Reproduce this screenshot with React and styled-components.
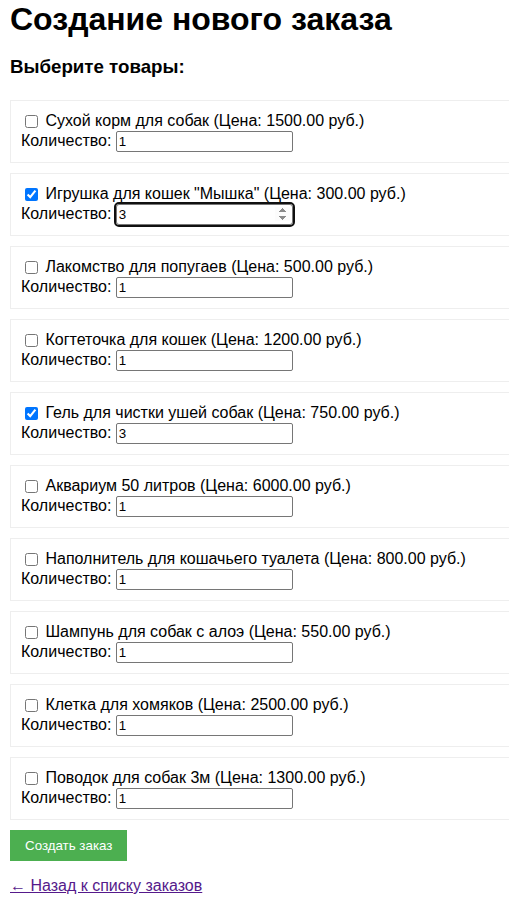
import React from 'react'
import styled, { createGlobalStyle } from 'styled-components'

const GlobalStyle = createGlobalStyle`
  body {
    margin: 0;
    padding: 0 10px;
    font-family: "Liberation Sans", Arial, sans-serif;
    color: #000;
    background: #fff;
  }
`

const Page = styled.div`
  padding-top: 1px;
`

const Title = styled.h1`
  font-size: 32px;
  font-weight: bold;
  margin: 0 0 18px;
`

const SubTitle = styled.h3`
  font-size: 18.72px;
  font-weight: bold;
  margin: 0 0 22px;
`

const Item = styled.div`
  width: 100%;
  border: 1px solid #eee;
  padding: 10px;
  margin-bottom: 10px;
  font-size: 16px;
`

const CheckLine = styled.label`
  display: block;
  height: 20px;
  line-height: 20px;
`

const Check = styled.input`
  margin: 3px 3px 3px 4px;
  vertical-align: -2px;
  accent-color: #0075ff;
`

const QtyLine = styled.label`
  display: block;
  height: 21px;
`

const QtyInput = styled.input`
  width: 177px;
  height: 21px;
  box-sizing: border-box;
  font-family: "Liberation Sans", Arial, sans-serif;
  font-size: 13.33px;
  padding: 1px 2px;
  border: 1px solid #767676;
  border-radius: 2px;
  ${p => p.$active && `
    outline: 2px solid #101010;
    outline-offset: 0;
    border-radius: 3px;
    &::-webkit-inner-spin-button { opacity: 1; }
  `}
`

const SubmitButton = styled.button`
  background: #4caf50;
  color: #fff;
  border: none;
  padding: 8px 15px;
  font-family: "Liberation Sans", Arial, sans-serif;
  font-size: 13.33px;
  cursor: pointer;
`

const Footer = styled.p`
  margin: 16px 0;
  font-size: 16px;
`

const BackLink = styled.a`
  color: #551a8b;
`

const products = [
  { name: 'Сухой корм для собак', price: '1500.00', checked: false, qty: 1 },
  { name: 'Игрушка для кошек "Мышка"', price: '300.00', checked: true, qty: 3, active: true },
  { name: 'Лакомство для попугаев', price: '500.00', checked: false, qty: 1 },
  { name: 'Когтеточка для кошек', price: '1200.00', checked: false, qty: 1 },
  { name: 'Гель для чистки ушей собак', price: '750.00', checked: true, qty: 3 },
  { name: 'Аквариум 50 литров', price: '6000.00', checked: false, qty: 1 },
  { name: 'Наполнитель для кошачьего туалета', price: '800.00', checked: false, qty: 1 },
  { name: 'Шампунь для собак с алоэ', price: '550.00', checked: false, qty: 1 },
  { name: 'Клетка для хомяков', price: '2500.00', checked: false, qty: 1 },
  { name: 'Поводок для собак 3м', price: '1300.00', checked: false, qty: 1 },
]

const App = () => {
  return (
    <Page>
      <GlobalStyle />
      <Title>Создание нового заказа</Title>
      <SubTitle>Выберите товары:</SubTitle>
      <form onSubmit={e => e.preventDefault()}>
        {products.map((p, i) => (
          <Item key={i}>
            <CheckLine>
              <Check type="checkbox" defaultChecked={p.checked} />
              {' '}{p.name} (Цена: {p.price} руб.)
            </CheckLine>
            <QtyLine>
              Количество: <QtyInput type="number" min="1" defaultValue={p.qty} $active={p.active} />
            </QtyLine>
          </Item>
        ))}
        <SubmitButton type="submit">Создать заказ</SubmitButton>
      </form>
      <Footer>
        <BackLink href="#">← Назад к списку заказов</BackLink>
      </Footer>
    </Page>
  )
}

export default App
